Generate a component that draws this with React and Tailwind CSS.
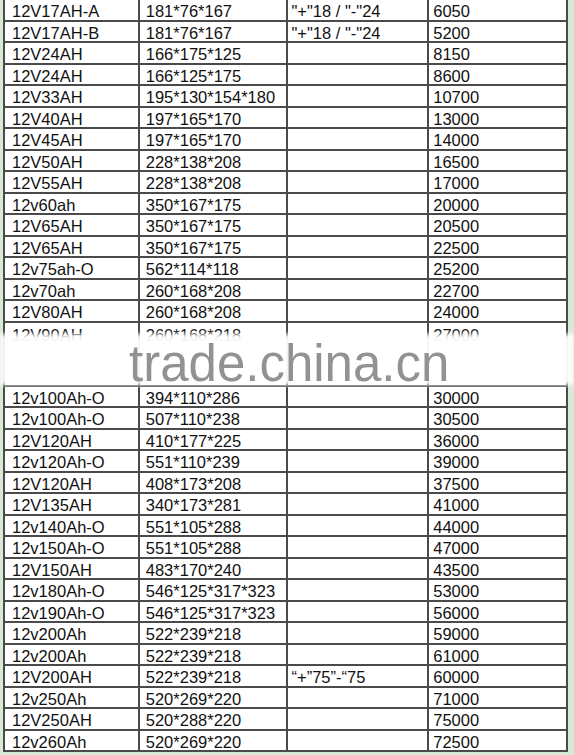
import React from "react";

const top = [
  ["12V17AH-A", "181*76*167", "\"+\"18 / \"-\"24", "6050"],
  ["12V17AH-B", "181*76*167", "\"+\"18 / \"-\"24", "5200"],
  ["12V24AH", "166*175*125", "", "8150"],
  ["12V24AH", "166*125*175", "", "8600"],
  ["12V33AH", "195*130*154*180", "", "10700"],
  ["12V40AH", "197*165*170", "", "13000"],
  ["12V45AH", "197*165*170", "", "14000"],
  ["12V50AH", "228*138*208", "", "16500"],
  ["12V55AH", "228*138*208", "", "17000"],
  ["12v60ah", "350*167*175", "", "20000"],
  ["12V65AH", "350*167*175", "", "20500"],
  ["12V65AH", "350*167*175", "", "22500"],
  ["12v75ah-O", "562*114*118", "", "25200"],
  ["12v70ah", "260*168*208", "", "22700"],
  ["12V80AH", "260*168*208", "", "24000"],
];

const bottom = [
  ["12v100Ah-O", "394*110*286", "", "30000"],
  ["12v100Ah-O", "507*110*238", "", "30500"],
  ["12V120AH", "410*177*225", "", "36000"],
  ["12v120Ah-O", "551*110*239", "", "39000"],
  ["12V120AH", "408*173*208", "", "37500"],
  ["12V135AH", "340*173*281", "", "41000"],
  ["12v140Ah-O", "551*105*288", "", "44000"],
  ["12v150Ah-O", "551*105*288", "", "47000"],
  ["12V150AH", "483*170*240", "", "43500"],
  ["12v180Ah-O", "546*125*317*323", "", "53000"],
  ["12v190Ah-O", "546*125*317*323", "", "56000"],
  ["12v200Ah", "522*239*218", "", "59000"],
  ["12v200Ah", "522*239*218", "", "61000"],
  ["12V200AH", "522*239*218", "\u201c+\u201d75\u201d-\u201c75", "60000"],
  ["12v250Ah", "520*269*220", "", "71000"],
  ["12V250AH", "520*288*220", "", "75000"],
  ["12v260Ah", "520*269*220", "", "72500"],
];

function Row({ r, tall }) {
  const rowH = tall ? "h-[64px]" : "h-[21.5px]";
  const al = tall ? "items-start pt-[4px]" : "items-center pt-[3px]";
  return (
    <div className={`flex ${rowH} border-b-2 border-[#4a4a4a]`}>
      <div className={`flex ${al} w-[135px] border-r-2 border-[#4a4a4a] pl-[7px]`}>{r[0]}</div>
      <div className={`flex ${al} w-[148px] border-r-2 border-[#4a4a4a] pl-[6px]`}>{r[1]}</div>
      <div className={`flex ${al} w-[142px] border-r-2 border-[#4a4a4a] pl-[4px]`}>{r[2]}</div>
      <div className={`flex ${al} w-[139px] border-r-2 border-[#4a4a4a] pl-[4px]`}>{r[3]}</div>
    </div>
  );
}

export default function App() {
  return (
    <div className="relative w-[574px] h-[755px] overflow-hidden bg-[#d7ead6] pl-[3px] pr-[6px] pb-[3px]">
      <div
        className="w-[565px] bg-white border-l-2 border-[#4a4a4a] text-[16.5px] leading-none text-[#111]"
        style={{ fontFamily: '"Liberation Sans", Arial, sans-serif' }}
      >
        {top.map((r, i) => (
          <Row key={"t" + i} r={r} />
        ))}
        <Row r={["12V90AH", "260*168*218", "", "27000"]} tall />
        {bottom.map((r, i) => (
          <Row key={"b" + i} r={r} />
        ))}
      </div>
      <div className="absolute left-0 right-0 top-[334px] h-[51px] bg-white/95 blur-[2px]" />
      <div
        className="absolute left-[129px] top-[338px] text-[51px] leading-none text-[#929292]"
        style={{ fontFamily: '"Liberation Sans", Arial, sans-serif' }}
      >
        trade.china.cn
      </div>
    </div>
  );
}
